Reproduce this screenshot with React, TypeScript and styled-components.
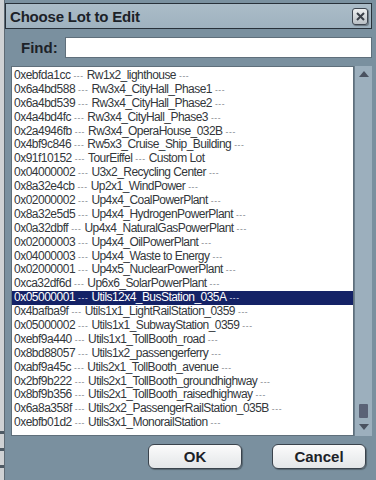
import React from 'react';
import styled, { createGlobalStyle } from 'styled-components';

const GlobalStyle = createGlobalStyle`
    html, body {
        margin: 0;
        padding: 0;
        background: #7a909f;
    }
`;

// [instance id, lot name, trailing text]
const lots: [string, string, string][] = [
    ['0xebfda1cc', 'Rw1x2_lighthouse', ''],
    ['0x6a4bd588', 'Rw3x4_CityHall_Phase1', ''],
    ['0x6a4bd539', 'Rw3x4_CityHall_Phase2', ''],
    ['0x4a4bd4fc', 'Rw3x4_CityHall_Phase3', ''],
    ['0x2a4946fb', 'Rw3x4_OperaHouse_032B', ''],
    ['0x4bf9c846', 'Rw5x3_Cruise_Ship_Building', ''],
    ['0x91f10152', 'TourEiffel', 'Custom Lot'],
    ['0x04000002', 'U3x2_Recycling Center', ''],
    ['0x8a32e4cb', 'Up2x1_WindPower', ''],
    ['0x02000002', 'Up4x4_CoalPowerPlant', ''],
    ['0x8a32e5d5', 'Up4x4_HydrogenPowerPlant', ''],
    ['0x0a32dbff', 'Up4x4_NaturalGasPowerPlant', ''],
    ['0x02000003', 'Up4x4_OilPowerPlant', ''],
    ['0x04000003', 'Up4x4_Waste to Energy', ''],
    ['0x02000001', 'Up4x5_NuclearPowerPlant', ''],
    ['0xca32df6d', 'Up6x6_SolarPowerPlant', ''],
    ['0x05000001', 'Utils12x4_BusStation_035A', ''],
    ['0x4bafba9f', 'Utils1x1_LightRailStation_0359', ''],
    ['0x05000002', 'Utils1x1_SubwayStation_0359', ''],
    ['0xebf9a440', 'Utils1x1_TollBooth_road', ''],
    ['0x8bd88057', 'Utils1x2_passengerferry', ''],
    ['0xabf9a45c', 'Utils2x1_TollBooth_avenue', ''],
    ['0x2bf9b222', 'Utils2x1_TollBooth_groundhighway', ''],
    ['0x8bf9b356', 'Utils2x1_TollBooth_raisedhighway', ''],
    ['0x6a8a358f', 'Utils2x2_PassengerRailStation_035B', ''],
    ['0xebfb01d2', 'Utils3x1_MonorailStation', ''],
];

const SELECTED = '0x05000001';

function App() {
    return (
        <Screen>
            <GlobalStyle />
            <LeftStrip>
                <StripTick />
                <StripTick />
                <StripTick />
            </LeftStrip>
            <Dialog>
                <TitleBar>
                    <Title>Choose Lot to Edit</Title>
                    <CloseButton>
                        <svg width="11" height="11" viewBox="0 0 11 11">
                            <path d="M2 2 L9 9 M9 2 L2 9" stroke="#3a4048" strokeWidth="2" />
                        </svg>
                    </CloseButton>
                </TitleBar>
                <FindRow>
                    <FindLabel>Find:</FindLabel>
                    <FindInput />
                </FindRow>
                <ListArea>
                    <List>
                        {lots.map(([id, name, extra]) => {
                            const selected = id === SELECTED;
                            return (
                                <Row key={id} selected={selected}>
                                    <Hex>{id}</Hex>
                                    <Dashes selected={selected}>---</Dashes>
                                    <LotName>{name}</LotName>
                                    <Dashes selected={selected}>---</Dashes>
                                    {extra && <LotName>{extra}</LotName>}
                                </Row>
                            );
                        })}
                    </List>
                    <ScrollBar>
                        <svg width="10" height="6" viewBox="0 0 10 6">
                            <path d="M0 6 L5 0 L10 6 Z" fill="#4a5260" />
                        </svg>
                        <Thumb />
                        <svg width="10" height="6" viewBox="0 0 10 6">
                            <path d="M0 0 L5 6 L10 0 Z" fill="#4a5260" />
                        </svg>
                    </ScrollBar>
                </ListArea>
                <Buttons>
                    <DialogButton>OK</DialogButton>
                    <DialogButton>Cancel</DialogButton>
                </Buttons>
            </Dialog>
        </Screen>
    );
}

const Screen = styled.div`
    width: 376px;
    height: 480px;
    display: flex;
    background: #7a909f;
    overflow: hidden;
    font-family: 'Liberation Sans', Arial, sans-serif;
`;

const LeftStrip = styled.div`
    width: 5px;
    height: 100%;
    background: #cfd2d4;
    border-right: 1px solid #5d6a74;
    flex-shrink: 0;
    display: flex;
    flex-direction: column;
    justify-content: flex-end;
    gap: 14px;
    padding-bottom: 12px;
    box-sizing: border-box;
`;

const StripTick = styled.div`
    height: 3px;
    background: #4e5a64;
`;

const Dialog = styled.div`
    flex: 1;
    display: flex;
    flex-direction: column;
    padding: 3px 4px 0 0;
`;

const TitleBar = styled.div`
    height: 24px;
    display: flex;
    align-items: center;
    justify-content: space-between;
    background: linear-gradient(#abbcc8, #9fb2bf);
    border: 1px solid #28313a;
    padding: 0 3px 0 4px;
`;

const Title = styled.div`
    font-size: 15px;
    font-weight: bold;
    color: #1c2228;
    letter-spacing: -0.2px;
`;

const CloseButton = styled.div`
    width: 14px;
    height: 15px;
    display: flex;
    align-items: center;
    justify-content: center;
    background: linear-gradient(#eef0f1, #b9c0c5);
    border: 1px solid #3e4650;
    border-radius: 3px;
    box-shadow: 1px 1px 1px rgba(0, 0, 0, 0.35);
`;

const FindRow = styled.div`
    display: flex;
    align-items: center;
    margin-top: 8px;
    padding-left: 16px;
    gap: 7px;
`;

const FindLabel = styled.div`
    font-size: 15px;
    font-weight: bold;
    color: #1c2228;
`;

const FindInput = styled.div`
    flex: 1;
    height: 21px;
    background: #ffffff;
    border: 1px solid #5f6f7b;
    box-sizing: border-box;
`;

const ListArea = styled.div`
    display: flex;
    margin-top: 8px;
    margin-left: 6px;
    height: 370px;
`;

const List = styled.div`
    flex: 1;
    background: #ffffff;
    border: 1px solid #5f6f7b;
    padding-top: 2px;
    overflow: hidden;
`;

const Row = styled.div<{ selected?: boolean }>`
    height: 13.9px;
    line-height: 13.9px;
    padding-left: 2px;
    font-size: 12px;
    white-space: nowrap;
    color: ${(p) => (p.selected ? '#ffffff' : '#33373b')};
    background: ${(p) => (p.selected ? '#142266' : 'transparent')};
`;

const Hex = styled.span`
    letter-spacing: -0.5px;
`;

const LotName = styled.span`
    letter-spacing: -0.55px;
`;

const Dashes = styled.span<{ selected?: boolean }>`
    display: inline-block;
    margin: 0 3px;
    font-size: 8.5px;
    letter-spacing: 0.6px;
    color: ${(p) => (p.selected ? '#d8dcf0' : '#85898e')};
`;

const ScrollBar = styled.div`
    width: 18px;
    display: flex;
    flex-direction: column;
    align-items: center;
    justify-content: space-between;
    background: #9cafbd;
    border-left: 1px solid #6c7f8d;
    padding: 5px 0 6px;
    box-sizing: border-box;
`;

const Thumb = styled.div`
    width: 9px;
    height: 14px;
    margin-top: auto;
    margin-bottom: 6px;
    background: #5a6276;
    border-radius: 1px;
`;

const Buttons = styled.div`
    display: flex;
    justify-content: flex-end;
    gap: 30px;
    margin-top: 8px;
    padding-right: 6px;
`;

const DialogButton = styled.div`
    width: 94px;
    height: 25px;
    display: flex;
    align-items: center;
    justify-content: center;
    box-sizing: border-box;
    background: linear-gradient(#fbfbfb, #e3e6e8);
    border: 1px solid #3a434c;
    border-radius: 6px;
    box-shadow: 1px 1px 1px rgba(0, 0, 0, 0.3);
    font-size: 15px;
    font-weight: bold;
    color: #1c2228;
`;

export default App;
